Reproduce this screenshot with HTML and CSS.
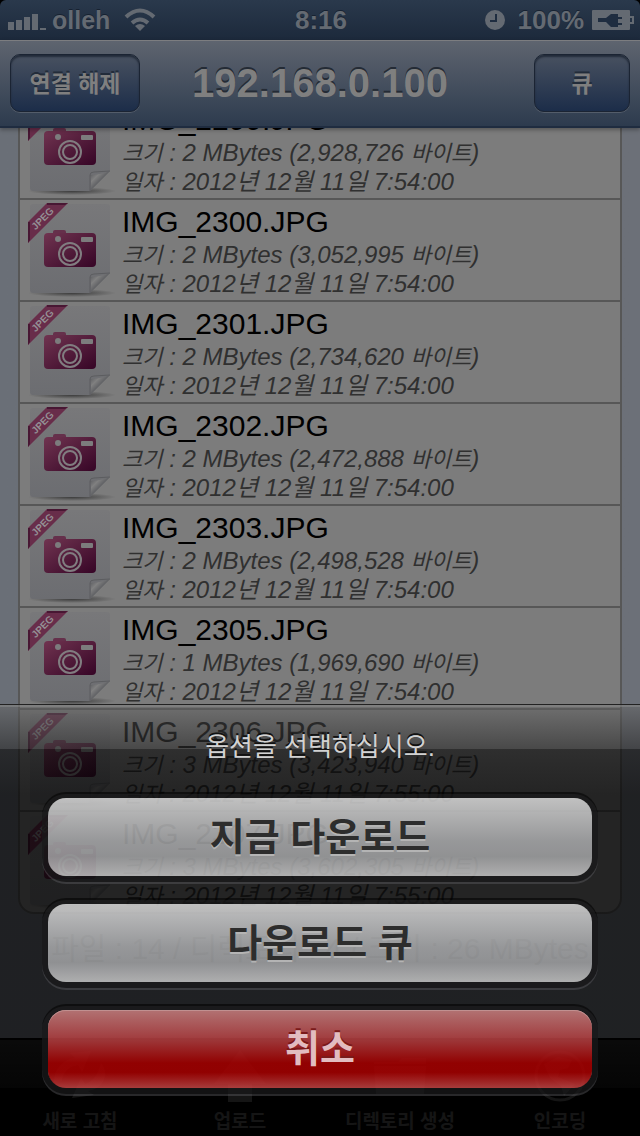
FILE: index.html
```html
<!DOCTYPE html>
<html lang="ko">
<head>
    <meta charset="UTF-8">
    <meta name="viewport" content="width=device-width">
    <title>192.168.0.100</title>
    <link rel="stylesheet" href="styles.css">
</head>
<body>
<svg class="defs" aria-hidden="true">
    <defs>
        <linearGradient id="paper" x1="0" y1="0" x2="0" y2="1">
            <stop offset="0" stop-color="#78787a"/>
            <stop offset="1" stop-color="#6c6d71"/>
        </linearGradient>
        <linearGradient id="plum" x1="0" y1="0" x2="1" y2="1">
            <stop offset="0" stop-color="#703450"/>
            <stop offset="1" stop-color="#360526"/>
        </linearGradient>
        <linearGradient id="curl" x1="0" y1="0" x2="1" y2="1">
            <stop offset="0.1" stop-color="#606164"/>
            <stop offset="0.3" stop-color="#808080"/>
            <stop offset="0.5" stop-color="#606164"/>
        </linearGradient>
        <radialGradient id="shade">
            <stop offset="0" stop-color="#333" stop-opacity="0.9"/>
            <stop offset="1" stop-color="#333" stop-opacity="0"/>
        </radialGradient>
    </defs>
    <symbol id="jpeg" viewBox="0 0 98 98">
        <ellipse cx="52" cy="93" rx="44" ry="4" fill="url(#shade)"/>
        <path d="M13 4H87Q90 4 90 7V73L70 93H13Q10 93 10 90V7Q10 4 13 4Z" fill="url(#paper)"/>
        <path d="M70 93Q72 84 70 77Q80 77 90 73Z" fill="url(#curl)"/>
        <path d="M70 93V77Q70 74 74 74L90 73" fill="none" stroke="#5c5d60"/>
        <path d="M27 3H48L8 43V22Z" fill="#682d4a"/>
        <path d="M8 22V43L10 40V22ZM27 3H48L45 5H27Z" fill="#481733"/>
        <text text-anchor="middle" transform="translate(25 21) rotate(-45)" class="ribbon">JPEG</text>
        <rect x="33" y="30" width="13" height="6" rx="2" fill="#65304b"/>
        <rect x="24" y="33" width="52" height="34" rx="4" fill="url(#plum)"/>
        <circle cx="38" cy="39" r="3" fill="#7c7c7d"/>
        <rect x="61" y="37" width="12" height="5" rx="1" fill="#7c7c7d"/>
        <circle cx="50" cy="54" r="11" fill="none" stroke="#817d80" stroke-width="2"/>
        <circle cx="50" cy="54" r="7" fill="none" stroke="#817d80" stroke-width="2"/>
    </symbol>
</svg>

<div class="screen">
    <div class="status">
        <div class="carrier">
            <svg width="40" height="20" viewBox="0 0 40 20" fill="#646a72">
                <path d="M0 12h6v8H0zM8 10h6v10H8zM16 7h6v13h-6zM24 4h6v16h-6zM32 18h6v2h-6z"/>
            </svg>
            <span>olleh</span>
            <svg width="32" height="24" viewBox="0 0 32 24" fill="none" stroke="#646a72" stroke-width="4">
                <path d="M2 9Q16 -4 30 9M8 15Q16 8 24 15"/>
                <path d="M16 23L11 18Q16 14 21 18Z" fill="#646a72" stroke="none"/>
            </svg>
        </div>
        <div class="clock">8:16</div>
        <div class="power">
            <svg width="20" height="20" viewBox="0 0 20 20">
                <circle cx="10" cy="10" r="10" fill="#646a72"/>
                <path d="M11 4V11H5" fill="none" stroke="#1f2d40" stroke-width="2"/>
            </svg>
            <span>100%</span>
            <svg width="42" height="20" viewBox="0 0 42 20">
                <rect width="38" height="20" rx="1" fill="#646a72"/>
                <path d="M38 6h4v8h-4v-2h2V8h-2z" fill="#646a72"/>
                <path d="M6 8h8l5-4h7v3h4v2h-4v4h4v2h-4v2h-7l-5-5H6z" fill="#1f2d40"/>
            </svg>
        </div>
    </div>

    <header class="navbar">
        <button type="button" class="navbtn">연결 해제</button>
        <h1>192.168.0.100</h1>
        <button type="button" class="navbtn queue">큐</button>
    </header>

    <main class="content">
        <ul class="files">
            <li>
                <svg class="thumb"><use href="#jpeg"/></svg>
                <div class="info">
                    <h2>IMG_2299.JPG</h2>
                    <p><span>크기</span> : 2 MBytes (2,928,726 <span>바이트</span>)</p>
                    <p><span>일자</span> : 2012년 12월 11일 7:54:00</p>
                </div>
            </li>
            <li>
                <svg class="thumb"><use href="#jpeg"/></svg>
                <div class="info">
                    <h2>IMG_2300.JPG</h2>
                    <p><span>크기</span> : 2 MBytes (3,052,995 <span>바이트</span>)</p>
                    <p><span>일자</span> : 2012년 12월 11일 7:54:00</p>
                </div>
            </li>
            <li>
                <svg class="thumb"><use href="#jpeg"/></svg>
                <div class="info">
                    <h2>IMG_2301.JPG</h2>
                    <p><span>크기</span> : 2 MBytes (2,734,620 <span>바이트</span>)</p>
                    <p><span>일자</span> : 2012년 12월 11일 7:54:00</p>
                </div>
            </li>
            <li>
                <svg class="thumb"><use href="#jpeg"/></svg>
                <div class="info">
                    <h2>IMG_2302.JPG</h2>
                    <p><span>크기</span> : 2 MBytes (2,472,888 <span>바이트</span>)</p>
                    <p><span>일자</span> : 2012년 12월 11일 7:54:00</p>
                </div>
            </li>
            <li>
                <svg class="thumb"><use href="#jpeg"/></svg>
                <div class="info">
                    <h2>IMG_2303.JPG</h2>
                    <p><span>크기</span> : 2 MBytes (2,498,528 <span>바이트</span>)</p>
                    <p><span>일자</span> : 2012년 12월 11일 7:54:00</p>
                </div>
            </li>
            <li>
                <svg class="thumb"><use href="#jpeg"/></svg>
                <div class="info">
                    <h2>IMG_2305.JPG</h2>
                    <p><span>크기</span> : 1 MBytes (1,969,690 <span>바이트</span>)</p>
                    <p><span>일자</span> : 2012년 12월 11일 7:54:00</p>
                </div>
            </li>
            <li>
                <svg class="thumb"><use href="#jpeg"/></svg>
                <div class="info">
                    <h2>IMG_2306.JPG</h2>
                    <p><span>크기</span> : 3 MBytes (3,423,940 <span>바이트</span>)</p>
                    <p><span>일자</span> : 2012년 12월 11일 7:55:00</p>
                </div>
            </li>
            <li>
                <svg class="thumb"><use href="#jpeg"/></svg>
                <div class="info">
                    <h2>IMG_2307.JPG</h2>
                    <p><span>크기</span> : 3 MBytes (3,602,305 <span>바이트</span>)</p>
                    <p><span>일자</span> : 2012년 12월 11일 7:55:00</p>
                </div>
            </li>
        </ul>
        <p class="summary">파일 : 14 / 디렉토리 : 4 / 크기 : 26 MBytes</p>
    </main>

    <nav class="tabs">
        <button type="button">
            <svg width="60" height="52" viewBox="0 0 60 52" fill="currentColor">
                <path d="M4 32C4 18 14 9 25 8L20 3L41 1L32 22L28 15C17 17 12 24 12 31Z"/>
                <path d="M51 13C60 24 54 38 38 41L44 45L22 48L31 28L35 34C44 31 48 24 51 13Z"/>
            </svg>
            새로 고침
        </button>
        <button type="button">
            <svg width="60" height="52" viewBox="0 0 60 52" fill="currentColor">
                <path d="M30 0L56 34H42V52H18V34H4Z"/>
            </svg>
            업로드
        </button>
        <button type="button">
            <svg width="60" height="52" viewBox="0 0 60 52" fill="currentColor">
                <path d="M4 12H28L32 8H56V14H4ZM4 16H56L54 44H6Z"/>
            </svg>
            디렉토리 생성
        </button>
        <button type="button">
            <svg width="60" height="52" viewBox="0 0 60 52" fill="currentColor">
                <circle cx="30" cy="26" r="24" fill="none" stroke="currentColor" stroke-width="3"/>
                <path d="M14 14L28 7L42 10L38 18L30 20L28 27L38 31L45 34L34 46L31 36L20 28Z"/>
            </svg>
            인코딩
        </button>
    </nav>

    <div class="sheet" role="dialog" aria-labelledby="sheet-title">
        <p id="sheet-title">옵션을 선택하십시오.</p>
        <button type="button">지금 다운로드</button>
        <button type="button">다운로드 큐</button>
        <button type="button" class="cancel">취소</button>
    </div>
</div>
</body>
</html>
```
FILE: styles.css
```css
*{
    margin: 0;
    padding: 0;
    box-sizing: border-box;
}
body{
    background: #000;
    font-family: "Liberation Sans", "Noto Sans CJK KR", sans-serif;
}
button{
    border: 0;
    font-family: inherit;
    font-weight: bold;
    cursor: pointer;
}
.defs{
    position: absolute;
    width: 0;
    height: 0;
}
.screen{
    position: relative;
    display: flex;
    flex-direction: column;
    min-height: 100vh;
    overflow: hidden;
}

/* status bar */
.status{
    display: grid;
    grid-template-columns: 1fr auto 1fr;
    align-items: center;
    height: 40px;
    padding: 0 6px 0 8px;
    background: linear-gradient(#2a394c, #1c293b);
    border-radius: 6px 6px 0 0;
    color: #646a72;
    font-size: 26px;
    font-weight: bold;
    text-shadow: 0 -1px 0 #172231;
}
.carrier,.power{
    display: flex;
    align-items: center;
}
.carrier span{
    margin: 0 14px 0 4px;
    font-size: 25px;
}
.power{
    justify-content: flex-end;
}
.power span{
    margin: 0 8px 0 13px;
}

/* navigation bar */
.navbar{
    position: relative;
    z-index: 1;
    display: grid;
    grid-template-columns: 1fr auto 1fr;
    align-items: center;
    height: 88px;
    padding: 0 10px 2px;
    background: linear-gradient(#5e646f, #2d3b4e);
    border-top: 1px solid #7c7d80;
    border-bottom: 2px solid #1f2c40;
    box-shadow: 0 2px 4px rgba(0, 0, 0, 0.3);
}
.navbar h1{
    color: #7f7f7f;
    font-size: 40px;
    line-height: 48px;
    text-shadow: 0 -2px 0 #242b35;
}
.navbtn{
    width: 130px;
    height: 58px;
    padding-bottom: 2px;
    background: linear-gradient(#485160, #1c2d49);
    border: 1px solid #1b2433;
    border-radius: 10px;
    box-shadow: inset 0 2px 2px #222b39, 0 1px 0 #545d6a;
    color: #7f7f7f;
    font-size: 23px;
    text-shadow: 0 -2px 0 #222c3a;
}
.navbtn.queue{
    justify-self: end;
    width: 96px;
}

/* file list */
.content{
    flex: 1;
    overflow: hidden;
    background: linear-gradient(90deg, #6a6f77, #6c7078);
}
.files{
    margin: -32px 18px 0;
    background: #7c7c7c;
    border: 2px solid #575757;
    border-radius: 16px;
    list-style: none;
}
.files li{
    display: flex;
    height: 102px;
    border-bottom: 2px solid #575757;
}
.files li:last-child{
    height: 100px;
    border-bottom: 0;
}
.thumb{
    flex: none;
    width: 98px;
    height: 98px;
    margin-right: 4px;
}
.ribbon{
    fill: #949094;
    font-size: 10px;
    font-weight: bold;
}
.info h2{
    margin-bottom: 1px;
    padding-top: 4px;
    color: #000;
    font-size: 30px;
    font-weight: normal;
    line-height: 36px;
}
.info p{
    color: #303030;
    font-size: 24px;
    font-style: italic;
    line-height: 28px;
    white-space: nowrap;
}
.info span{
    font-size: 22px;
}
.summary{
    color: #303438;
    font-size: 30px;
    line-height: 70px;
    text-align: center;
    white-space: nowrap;
}

/* bottom tabs */
.tabs{
    display: grid;
    grid-template-columns: repeat(4, 1fr);
    height: 98px;
    background: linear-gradient(#222, #111 50%, #000 50%);
    border-top: 2px solid #000;
}
.tabs button{
    display: flex;
    flex-direction: column;
    align-items: center;
    gap: 4px;
    padding-top: 10px;
    background: none;
    color: #484848;
    font-size: 19px;
    line-height: 32px;
}

/* action sheet lies over the list and the tabs */
.sheet{
    position: absolute;
    right: 0;
    bottom: 0;
    left: 0;
    display: flex;
    flex-direction: column;
    gap: 28px;
    padding: 24px 48px 48px;
    background: linear-gradient(rgba(100, 100, 100, 0.5), rgba(44, 44, 44, 0.64) 44px, rgba(10, 10, 10, 0.68) 44px, rgba(0, 0, 0, 0.71) 90px);
    border-top: 1px solid #222;
    box-shadow: inset 0 2px 0 rgba(150, 150, 150, 0.4);
}
.sheet p{
    margin-bottom: 5px;
    color: #d2d2d2;
    font-size: 26px;
    line-height: 36px;
    text-align: center;
    text-shadow: 0 -2px 0 #111;
}
.sheet button{
    height: 78px;
    padding-bottom: 8px;
    background: linear-gradient(rgba(245, 245, 245, 0.75), rgba(190, 191, 193, 0.75) 55%, rgba(181, 182, 184, 0.75) 75%, rgba(222, 222, 222, 0.75));
    border-radius: 18px;
    box-shadow: 0 0 0 6px rgba(0, 0, 0, 0.55), 0 2px 0 6px rgba(100, 100, 105, 0.4);
    color: #2d2d2d;
    font-size: 38px;
    text-shadow: 0 2px 0 #b4b4b4;
}
.sheet .cancel{
    background: linear-gradient(rgba(206, 130, 130, 0.84), rgba(184, 60, 62, 0.84) 40%, rgba(172, 0, 0, 0.84) 68%, rgba(172, 0, 0, 0.84) 80%, rgba(198, 70, 70, 0.84));
    box-shadow: inset 0 1px 0 #c09090, 0 0 0 6px rgba(0, 0, 0, 0.55), 0 2px 0 6px rgba(100, 100, 105, 0.4);
    color: #e2bcc0;
    text-shadow: 0 -2px 0 #7a1a1a;
}
```
